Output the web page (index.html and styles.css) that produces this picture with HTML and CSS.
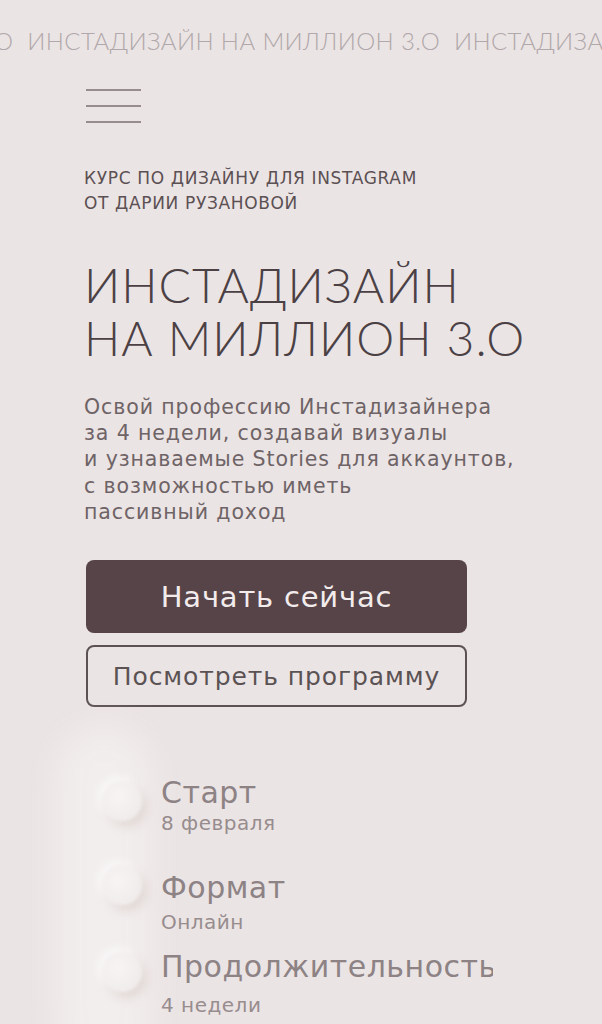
FILE: index.html
```html
<!DOCTYPE html>
<html lang="ru">
<head>
<meta charset="utf-8">
<title>Инстадизайн на миллион 3.0</title>
<link rel="stylesheet" href="styles.css">
</head>
<body>
<div class="marquee"><span class="marquee-track">О&nbsp;&nbsp;ИНСТАДИЗАЙН НА МИЛЛИОН 3.О&nbsp;&nbsp;ИНСТАДИЗАЙН НА МИЛЛИОН 3.О</span></div>
<main class="hero">
  <button class="burger" aria-label="Меню"><span></span><span></span><span></span></button>
  <p class="kicker">КУРС ПО ДИЗАЙНУ ДЛЯ INSTAGRAM<br>ОТ ДАРИИ РУЗАНОВОЙ</p>
  <h1 class="title">ИНСТАДИЗАЙН<br>НА МИЛЛИОН 3.О</h1>
  <p class="lead">Освой профессию Инстадизайнера<br>за 4 недели, создавай визуалы<br>и узнаваемые Stories для аккаунтов,<br>с возможностью иметь<br>пассивный доход</p>
  <div class="actions">
    <a class="btn btn-primary" href="#">Начать сейчас</a>
    <a class="btn btn-outline" href="#">Посмотреть программу</a>
  </div>
  <ul class="facts">
    <li class="fact fact-1">
      <span class="dot"></span>
      <div class="fact-text">
        <div class="fact-title">Старт</div>
        <div class="fact-sub">8 февраля</div>
      </div>
    </li>
    <li class="fact fact-2">
      <span class="dot"></span>
      <div class="fact-text">
        <div class="fact-title">Формат</div>
        <div class="fact-sub">Онлайн</div>
      </div>
    </li>
    <li class="fact fact-3">
      <span class="dot"></span>
      <div class="fact-text">
        <div class="fact-title">Продолжительность</div>
        <div class="fact-sub">4 недели</div>
      </div>
    </li>
  </ul>
</main>
</body>
</html>
```
FILE: styles.css
```css
html, body {
  margin: 0;
  padding: 0;
}
body {
  background: #ebe4e4;
  width: 602px;
  height: 1024px;
  overflow: hidden;
  font-family: "DejaVu Sans", "Noto Sans", sans-serif;
}

.marquee {
  padding-top: 25px;
  height: 32px;
  overflow: hidden;
  white-space: nowrap;
}
.marquee-track {
  display: block;
  margin-left: -6px;
  font-family: "Lato", "Liberation Sans", sans-serif;
  font-weight: 300;
  font-size: 24px;
  line-height: 32px;
  letter-spacing: 0.4px;
  color: #b0a8aa;
}

.hero {
  padding-left: 84px;
}

.burger {
  display: flex;
  flex-direction: column;
  gap: 14px;
  width: 55px;
  margin: 32px 0 0 2px;
  padding: 0;
  border: 0;
  background: none;
}
.burger span {
  display: block;
  height: 2px;
  background: #978c8e;
}

.kicker {
  margin: 43px 0 0;
  font-size: 17px;
  line-height: 25px;
  letter-spacing: 0.65px;
  color: #5b5053;
}

.title {
  margin: 42px 0 0;
  font-family: "Lato", "Liberation Sans", sans-serif;
  font-weight: 300;
  font-size: 48px;
  line-height: 53px;
  letter-spacing: 1px;
  color: #4b4144;
}

.lead {
  margin: 30px 0 0;
  font-size: 20.5px;
  line-height: 26.2px;
  letter-spacing: 0.9px;
  color: #6e6366;
}

.actions {
  display: flex;
  flex-direction: column;
  gap: 12px;
  width: 381px;
  margin: 35px 0 0 2px;
}
.btn {
  display: flex;
  align-items: center;
  justify-content: center;
  box-sizing: border-box;
  border-radius: 8px;
  text-decoration: none;
}
.btn-primary {
  height: 73px;
  background: #574449;
  color: #f3ecec;
  font-size: 29px;
  letter-spacing: 0.8px;
}
.btn-outline {
  height: 62px;
  border: 2px solid #5b5254;
  color: #5b5254;
  font-size: 25px;
  letter-spacing: 0.9px;
}

.facts {
  position: relative;
  list-style: none;
  margin: 69px 0 0 18px;
  padding: 0;
}
.facts::before {
  content: "";
  position: absolute;
  left: -46px;
  top: -50px;
  width: 96px;
  height: 340px;
  border-radius: 48px;
  background: rgba(248, 245, 245, 0.55);
  filter: blur(16px);
}
.fact {
  position: relative;
  display: flex;
  align-items: flex-start;
  gap: 19px;
}
.fact-2 { margin-top: 36px; }
.fact-3 { margin-top: 16px; }

.dot {
  flex: 0 0 40px;
  height: 40px;
  margin-top: 5px;
  border-radius: 50%;
  background: radial-gradient(circle at 40% 40%, #f7f4f4 0%, #f1eded 60%, #ebe6e5 100%);
  box-shadow: 5px 6px 10px rgba(190, 172, 160, 0.3), -4px -4px 10px rgba(255, 255, 255, 0.6);
  filter: blur(1.5px);
}
.fact-2 .dot { margin-top: -6px; }
.fact-3 .dot { margin-top: 2px; }

.fact-text {
  width: 332px;
  overflow: hidden;
}
.fact-title {
  font-size: 30px;
  line-height: 34px;
  letter-spacing: 0.5px;
  white-space: nowrap;
  color: #8d8284;
}
.fact-sub {
  margin-top: 1px;
  font-size: 20px;
  line-height: 24px;
  letter-spacing: 0.5px;
  color: #978c8e;
}
.fact-2 .fact-sub { margin-top: 5px; }
.fact-3 .fact-sub { margin-top: 9px; }
```
